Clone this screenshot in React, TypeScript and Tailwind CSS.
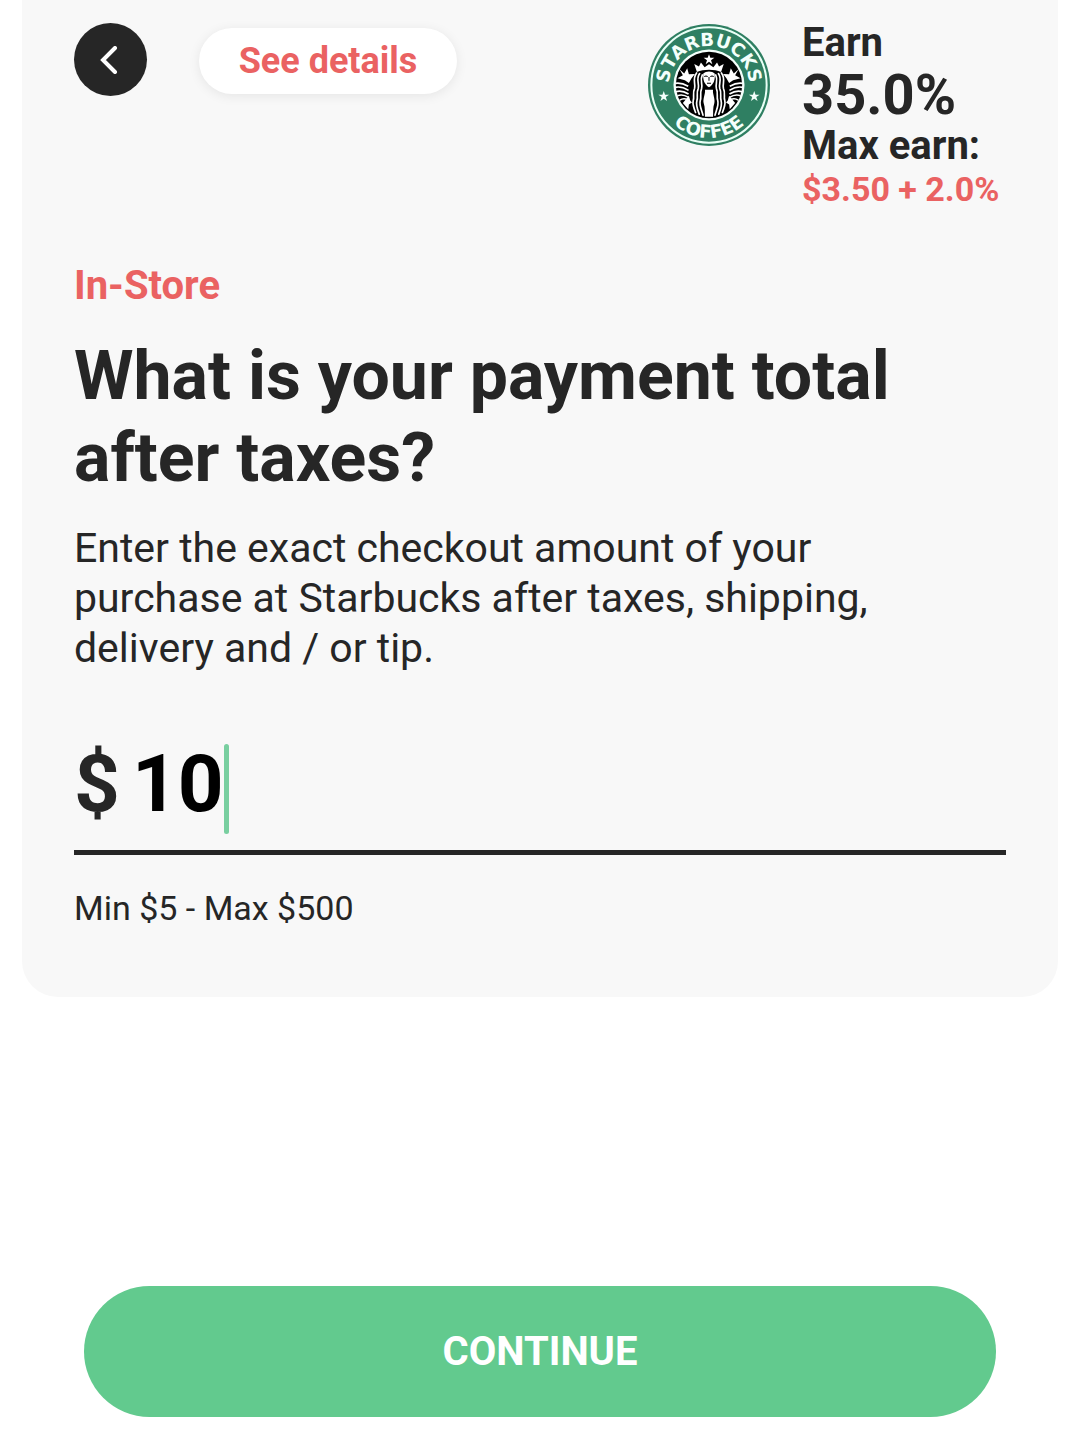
import { useState } from "react";

const STAR = "M0 -16 L4 -5 L16 -5 L6 2 L10 14 L0 7 L-10 14 L-6 2 L-16 -5 L-4 -5 Z";

// one side of the siren, mirrored for the other
function SirenHalf() {
  return (
    <g>
      <g fill="none" stroke="#fff" strokeWidth="5" strokeLinecap="round">
        <path d="M188 180 C180 196 190 208 186 220 C180 234 186 246 182 256 C178 270 186 284 190 300" />
        <path d="M180 176 C168 192 180 208 176 220 C169 234 176 246 172 256 C168 270 174 284 179 297" />
        <path d="M171 174 C157 192 169 208 165 220 C158 234 165 246 161 256 C158 268 163 280 168 292" />
      </g>
      <path
        fill="#fff"
        d="M120 163 L134 176 L143 160 L148 178 L166 177 L156 190 L148 204 L136 196 L114 190 L130 181 Z"
      />
      <g fill="none" stroke="#fff" strokeWidth="5">
        <path d="M108 205 C120 203 134 207 146 214" />
        <path d="M107 217 C120 214 134 218 147 226" />
        <path d="M109 230 C121 226 134 229 147 237" />
        <path d="M114 242 C124 238 136 240 147 247" />
        <path d="M121 255 C128 250 136 250 144 253" />
      </g>
      <path fill="#fff" d="M130 264 L148 242 L152 256 L157 262 L148 268 L146 282 Z" />
    </g>
  );
}

function StarbucksLogo() {
  return (
    <svg viewBox="26 28 364 364" className="size-[122px] shrink-0" role="img" aria-label="Starbucks Coffee">
      <defs>
        <path id="arc-top" d="M91 240 A120 120 0 1 1 325 240" />
        <path id="arc-bottom" d="M50 210 A158 158 0 0 0 366 210" />
      </defs>
      <circle cx="208" cy="210" r="182" fill="#2f7f62" />
      <circle cx="208" cy="210" r="172" fill="none" stroke="#e9fff6" strokeWidth="6" />
      <circle cx="208" cy="210" r="106" fill="#f4fffb" />
      <circle cx="208" cy="210" r="99" fill="#000" />
      <g fill="#f4fffb" className="font-['DejaVu_Sans'] font-bold" textAnchor="middle" fontSize="54">
        <text>
          <textPath href="#arc-top" startOffset="50%">
            STARBUCKS
          </textPath>
        </text>
        <text>
          <textPath href="#arc-bottom" startOffset="50%">
            COFFEE
          </textPath>
        </text>
      </g>
      <path d={STAR} transform="translate(73 244)" fill="#f4fffb" />
      <path d={STAR} transform="translate(343 244)" fill="#f4fffb" />
      <path d={STAR} transform="translate(208 134)" fill="#fff" />
      <path
        fill="#fff"
        d="M172 171 L164 147 L178 155 L184 143 L195 157 L208 148 L221 157 L232 143 L238 155 L252 147 L244 171 C224 162 192 162 172 171 Z"
      />
      <SirenHalf />
      <g transform="translate(416 0) scale(-1 1)">
        <SirenHalf />
      </g>
      <path fill="#fff" d="M191 176 C199 168 217 168 225 176 C227 194 222 209 208 217 C194 209 189 194 191 176 Z" />
      <path
        fill="#fff"
        d="M196 224 H220 C218 236 227 250 224 264 C219 278 221 292 220 305 H196 C195 292 197 278 192 264 C189 250 198 236 196 224 Z"
      />
      <path
        fill="none"
        stroke="#000"
        strokeWidth="3"
        d="M194 185 Q199 181 204 185 M212 185 Q217 181 222 185 M208 186 V197 M202 205 H214"
      />
    </svg>
  );
}

export default function App() {
  const [amount, setAmount] = useState("10");

  return (
    <div className="bg-white font-[Roboto,sans-serif] text-[#262626]">
      <main className="mx-[22px] rounded-b-[36px] bg-[#f8f8f8] px-[52px] pb-[67px]">
        <header className="flex items-start pt-5">
          <button
            type="button"
            aria-label="Back"
            className="mt-[3px] flex size-[73px] shrink-0 items-center justify-center rounded-full bg-[#262626]"
          >
            <svg viewBox="0 0 18 28" className="mr-1 h-7 w-[18px]" fill="none" stroke="#fff" strokeWidth="4" strokeLinecap="round">
              <path d="M15 2 L3 14 L15 26" />
            </svg>
          </button>
          <button
            type="button"
            className="mt-2 ml-[52px] h-[66px] w-[258px] rounded-full bg-white text-[36px] font-bold text-[#ea6262] shadow-[0_2px_12px_rgba(0,0,0,0.08)]"
          >
            See details
          </button>
          <div className="ml-auto flex gap-8">
            <div className="pt-1">
              <StarbucksLogo />
            </div>
            <div className="w-[204px] font-bold whitespace-nowrap">
              <p className="text-[40px] leading-[46px]">Earn</p>
              <p className="text-[56px] leading-[58px]">35.0%</p>
              <p className="text-[40px] leading-[44px]">Max earn:</p>
              <p className="text-[34px] leading-[42px] text-[#ea6262]">$3.50 + 2.0%</p>
            </div>
          </div>
        </header>

        <p className="mt-[52px] text-[40px] leading-[48px] font-bold text-[#ea6262]">In-Store</p>
        <h1 className="mt-[25px] text-[68px] leading-[82px] font-bold">
          What is your payment total
          <br />
          after taxes?
        </h1>
        <p className="mt-6 max-w-[840px] text-[41px] leading-[50px]">
          Enter the exact checkout amount of your purchase at Starbucks after taxes, shipping, delivery and / or tip.
        </p>

        <label className="mt-[67px] flex h-[115px] border-b-[5px] border-[#262626] text-[80px] leading-[88px] font-bold">
          <span className="mr-3">$</span>
          <input
            type="text"
            inputMode="decimal"
            aria-label="Payment total"
            value={amount}
            onChange={(e) => setAmount(e.target.value)}
            className="h-[88px] field-sizing-content text-black caret-transparent outline-none"
          />
          <span className="mt-1 h-[90px] w-[5px] rounded-full bg-[#79cfa0]" />
        </label>
        <p className="mt-[31px] text-[34px] leading-[44px]">Min $5 - Max $500</p>
      </main>

      <div className="px-[84px] pt-[289px] pb-6">
        <button type="button" className="h-[131px] w-full rounded-full bg-[#62ca8e] text-[40px] font-bold text-white">
          CONTINUE
        </button>
      </div>
    </div>
  );
}
